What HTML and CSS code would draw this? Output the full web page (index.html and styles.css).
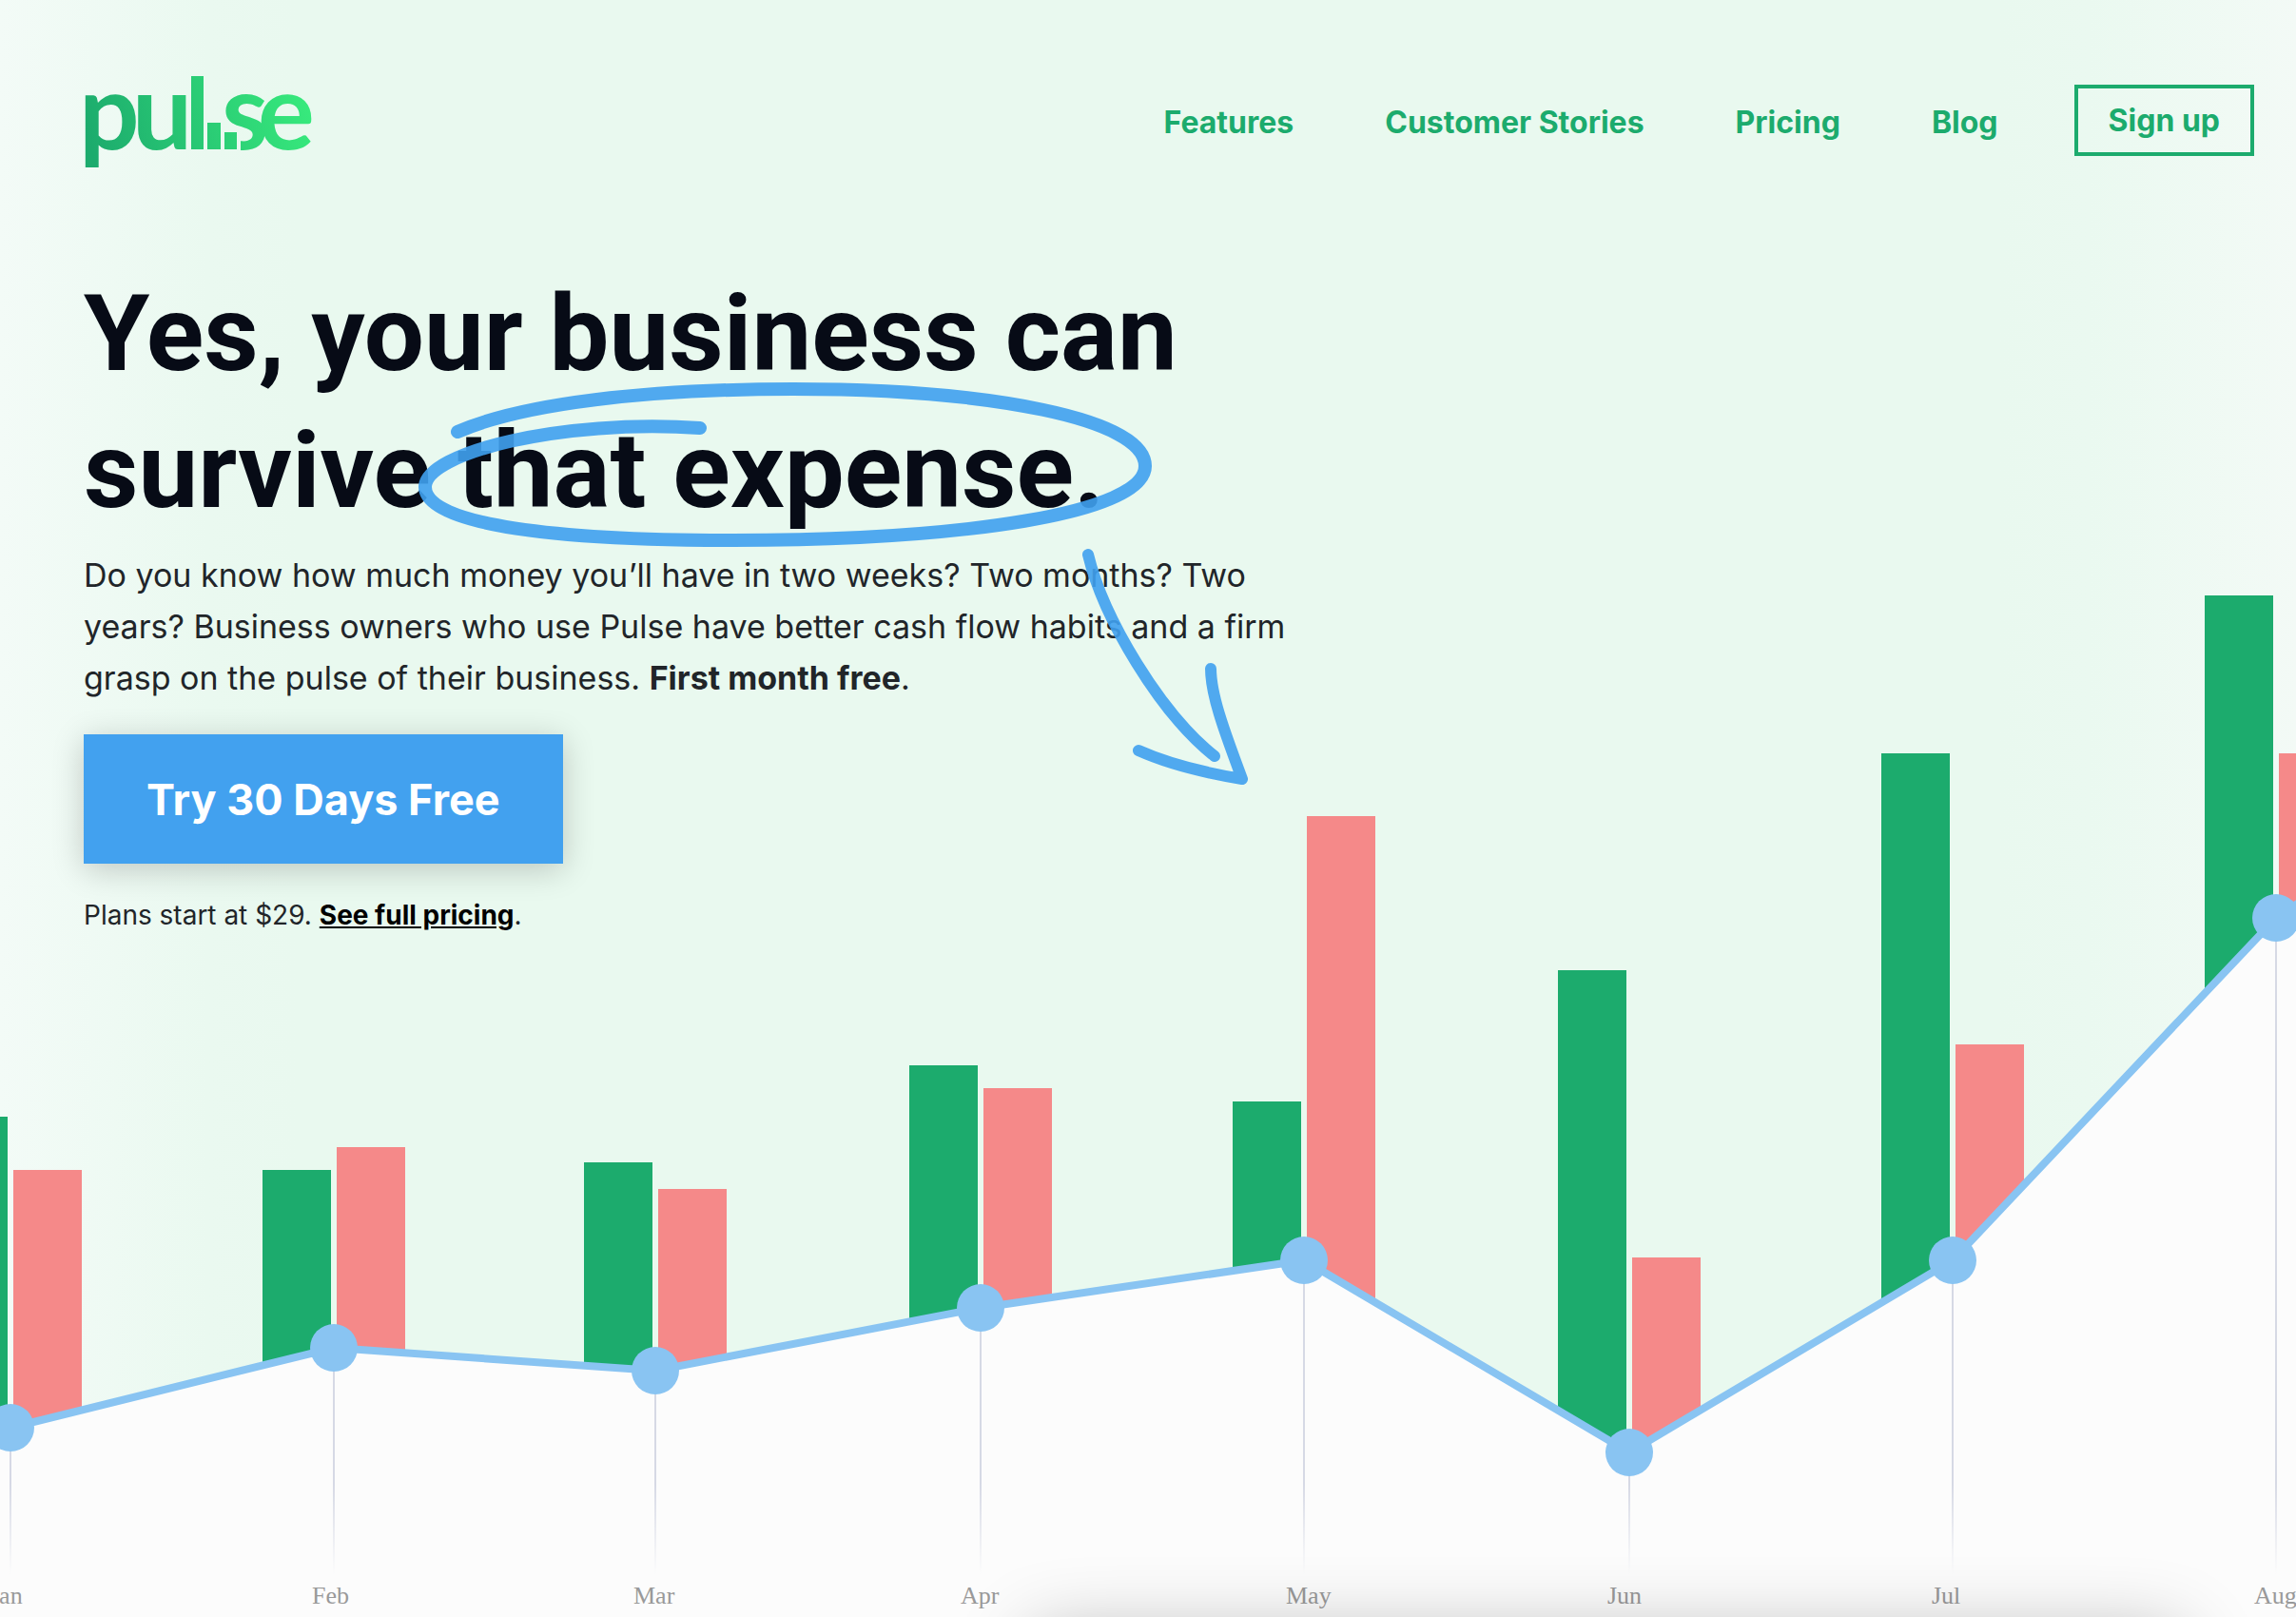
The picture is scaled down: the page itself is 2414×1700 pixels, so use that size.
FILE: index.html
```html
<!DOCTYPE html>
<html lang="en">
<head>
  <meta charset="utf-8">
  <meta name="viewport" content="width=device-width, initial-scale=1">
  <title>Pulse – Cash flow for your business</title>
  <link rel="stylesheet" href="styles.css">
</head>
<body>
  <div class="landing">
    <svg class="chart" viewBox="0 600 2414 1100" role="img" aria-label="Income, expenses and cash on hand by month">
      <defs>
        <linearGradient id="stem" gradientUnits="userSpaceOnUse" x1="0" y1="1560" x2="0" y2="1655">
          <stop offset="0" stop-color="#d6d9e5"/>
          <stop offset="1" stop-color="#d6d9e5" stop-opacity="0"/>
        </linearGradient>
      </defs>
      <g class="income">
        <rect x="-64" y="1174" width="72" height="420"/>
        <rect x="276" y="1230" width="72" height="230"/>
        <rect x="614" y="1222" width="72" height="230"/>
        <rect x="956" y="1120" width="72" height="280"/>
        <rect x="1296" y="1158" width="72" height="190"/>
        <rect x="1638" y="1020" width="72" height="510"/>
        <rect x="1978" y="792" width="72" height="578"/>
        <rect x="2318" y="626" width="72" height="420"/>
      </g>
      <g class="expense">
        <rect x="14" y="1230" width="72" height="272"/>
        <rect x="354" y="1206" width="72" height="220"/>
        <rect x="692" y="1250" width="72" height="194"/>
        <rect x="1034" y="1144" width="72" height="234"/>
        <rect x="1374" y="858" width="72" height="514"/>
        <rect x="1716" y="1322" width="72" height="206"/>
        <rect x="2056" y="1098" width="72" height="230"/>
        <rect x="2396" y="792" width="72" height="180"/>
      </g>
      <path class="area" d="M-330 1580 11 1501 351 1417 689 1441 1031 1375 1371 1325 1713 1527 2053 1325 2393 965 2733 740V1700H-330Z"/>
      <g class="stems">
        <rect x="10" y="1501" width="2" height="154"/>
        <rect x="350" y="1417" width="2" height="238"/>
        <rect x="688" y="1441" width="2" height="214"/>
        <rect x="1030" y="1375" width="2" height="280"/>
        <rect x="1370" y="1325" width="2" height="330"/>
        <rect x="1712" y="1527" width="2" height="128"/>
        <rect x="2052" y="1325" width="2" height="330"/>
        <rect x="2392" y="965" width="2" height="690"/>
      </g>
      <path class="cash" d="M-330 1580 11 1501 351 1417 689 1441 1031 1375 1371 1325 1713 1527 2053 1325 2393 965 2733 740"/>
      <g class="points">
        <circle cx="11" cy="1501" r="25"/>
        <circle cx="351" cy="1417" r="25"/>
        <circle cx="689" cy="1441" r="25"/>
        <circle cx="1031" cy="1375" r="25"/>
        <circle cx="1371" cy="1325" r="25"/>
        <circle cx="1713" cy="1527" r="25"/>
        <circle cx="2053" cy="1325" r="25"/>
        <circle cx="2393" cy="965" r="25"/>
      </g>
      <g class="months">
        <text x="-11" y="1686">Jan</text>
        <text x="328" y="1686">Feb</text>
        <text x="666" y="1686">Mar</text>
        <text x="1010" y="1686">Apr</text>
        <text x="1352" y="1686">May</text>
        <text x="1690" y="1686">Jun</text>
        <text x="2031" y="1686">Jul</text>
        <text x="2370" y="1686">Aug</text>
      </g>
    </svg>

    <div class="page">
      <header class="header">
        <a class="logo" href="#" aria-label="Pulse">
          <svg class="logo-mark" viewBox="90 80 238 98" aria-hidden="true">
            <defs>
              <linearGradient id="brand" gradientUnits="userSpaceOnUse" x1="100" y1="170" x2="320" y2="100">
                <stop offset="0" stop-color="#1cab6d"/>
                <stop offset="1" stop-color="#37e97c"/>
              </linearGradient>
              <clipPath id="s-cut"><path d="M230 90H290V165H253V138H230Z"/></clipPath>
            </defs>
            <g fill="url(#brand)">
              <text class="logo-letter" x="83" y="157">p</text>
              <text class="logo-letter" x="139" y="157">u</text>
              <path d="M201 80H214V157H201ZM218 129H232V157H218ZM236 139H249V157H236Z"/>
              <text class="logo-letter" x="233" y="157" clip-path="url(#s-cut)">s</text>
              <text class="logo-letter" x="271" y="157">e</text>
            </g>
          </svg>
        </a>
        <nav class="nav">
          <a class="nav-link" href="#">Features</a>
          <a class="nav-link" href="#">Customer Stories</a>
          <a class="nav-link" href="#">Pricing</a>
          <a class="nav-link" href="#">Blog</a>
          <a class="sign-up" href="#">Sign up</a>
        </nav>
      </header>

      <main class="hero">
        <h1 class="title">Yes, your business can<br>survive that expense.</h1>
        <p class="lead">Do you know how much money you’ll have in two weeks? Two months? Two<br>years? Business owners who use Pulse have better cash flow habits and a firm<br>grasp on the pulse of their business. <strong>First month free</strong>.</p>
        <button class="cta" type="button">Try 30 Days Free</button>
        <p class="plans">Plans start at $29. <a class="plans-link" href="#">See full pricing</a>.</p>
        <svg class="scribble" viewBox="88 275 1260 560" aria-hidden="true">
          <g fill="none" stroke="#40a1f0" stroke-linecap="round" stroke-linejoin="round">
            <path stroke-width="14" d="M481 454C550 424 680 409 834 409C1040 409 1204 440 1204 490C1204 540 1010 568 771 568C590 568 447 553 447 512C447 476 590 440 736 450"/>
            <path stroke-width="12" d="M1144 583C1160 650 1220 750 1277 795M1273 703C1273 732 1289 773 1306 819C1264 812 1226 802 1197 789"/>
          </g>
        </svg>
      </main>
    </div>
    <div class="next-card"></div>
  </div>
</body>
</html>
```
FILE: styles.css
```css
* {
  box-sizing: border-box;
}

body {
  margin: 0;
  color: #212529;
  font-family: Inter, "Liberation Sans", sans-serif;
}

/* The chart and the page content share one grid cell. */
.landing {
  position: relative;
  display: grid;
  min-height: 100vh;
  overflow: hidden;
  background: linear-gradient(90deg, #f3fbf7, #eaf9f0 9%, #e9f9ef 13%, #e9f9ef 87%, #eaf9f0 91%, #f3faf6);
}

.chart,
.page {
  grid-area: 1 / 1;
}

.chart {
  display: block;
  align-self: end;
  width: 100%;
}

.income {
  fill: #1cab6d;
}

.expense {
  fill: #f58989;
}

.area {
  fill: #fcfcfc;
}

.stems {
  fill: url(#stem);
}

.cash {
  fill: none;
  stroke: #89c4f2;
  stroke-width: 8;
}

.points {
  fill: #89c4f2;
}

.months {
  fill: #999;
  font: 26px "Liberation Serif", serif;
}

.page {
  position: relative;
  padding: 80px 44px 40px 88px;
}

.header {
  display: flex;
  align-items: flex-start;
  justify-content: space-between;
  padding-left: 2px;
}

.logo {
  display: block;
}

.logo-mark {
  display: block;
  width: 238px;
  height: 98px;
  overflow: visible;
}

.logo-letter {
  font: 700 112px Lato, sans-serif;
}

.nav {
  display: flex;
  align-items: center;
  gap: 96px;
  padding-top: 9px;
  font-size: 32px;
  font-weight: 700;
  line-height: 40px;
}

.nav-link,
.sign-up {
  color: #1cab6d;
  text-decoration: none;
}

.nav-link {
  padding-top: 4px;
}

.sign-up {
  margin-left: -16px;
  padding: 14px 32px 13px;
  border: 4px solid #1cab6d;
}

.hero {
  position: relative;
  padding-top: 101px;
}

.title {
  margin: 0;
  color: #070b16;
  font-family: Roboto, "Liberation Sans", sans-serif;
  font-size: 112px;
  font-weight: 700;
  line-height: 144px;
}

.lead {
  margin: 11px 0 32px;
  font-size: 34px;
  line-height: 54px;
}

.cta {
  display: block;
  height: 136px;
  padding: 0 66px;
  border: 0;
  background: #42a1ef;
  box-shadow: 0 6px 32px rgba(0, 0, 0, 0.2);
  color: #fff;
  font: 700 45px Inter, "Liberation Sans", sans-serif;
}

.plans {
  margin: 34px 0 0;
  font-size: 28px;
  line-height: 40px;
}

.plans-link {
  color: #000;
  font-weight: 700;
}

/* Hand-drawn marks over the headline and the lead text. */
.scribble {
  position: absolute;
  top: 97px;
  left: 0;
  width: 1260px;
  opacity: 0.9;
  pointer-events: none;
}

/* The card of the next section casts its shadow up from below the fold. */
.next-card {
  position: absolute;
  top: calc(100% + 20px);
  right: 5%;
  left: 45%;
  height: 200px;
  box-shadow: 0 0 80px rgba(0, 0, 0, 0.3);
}
```
